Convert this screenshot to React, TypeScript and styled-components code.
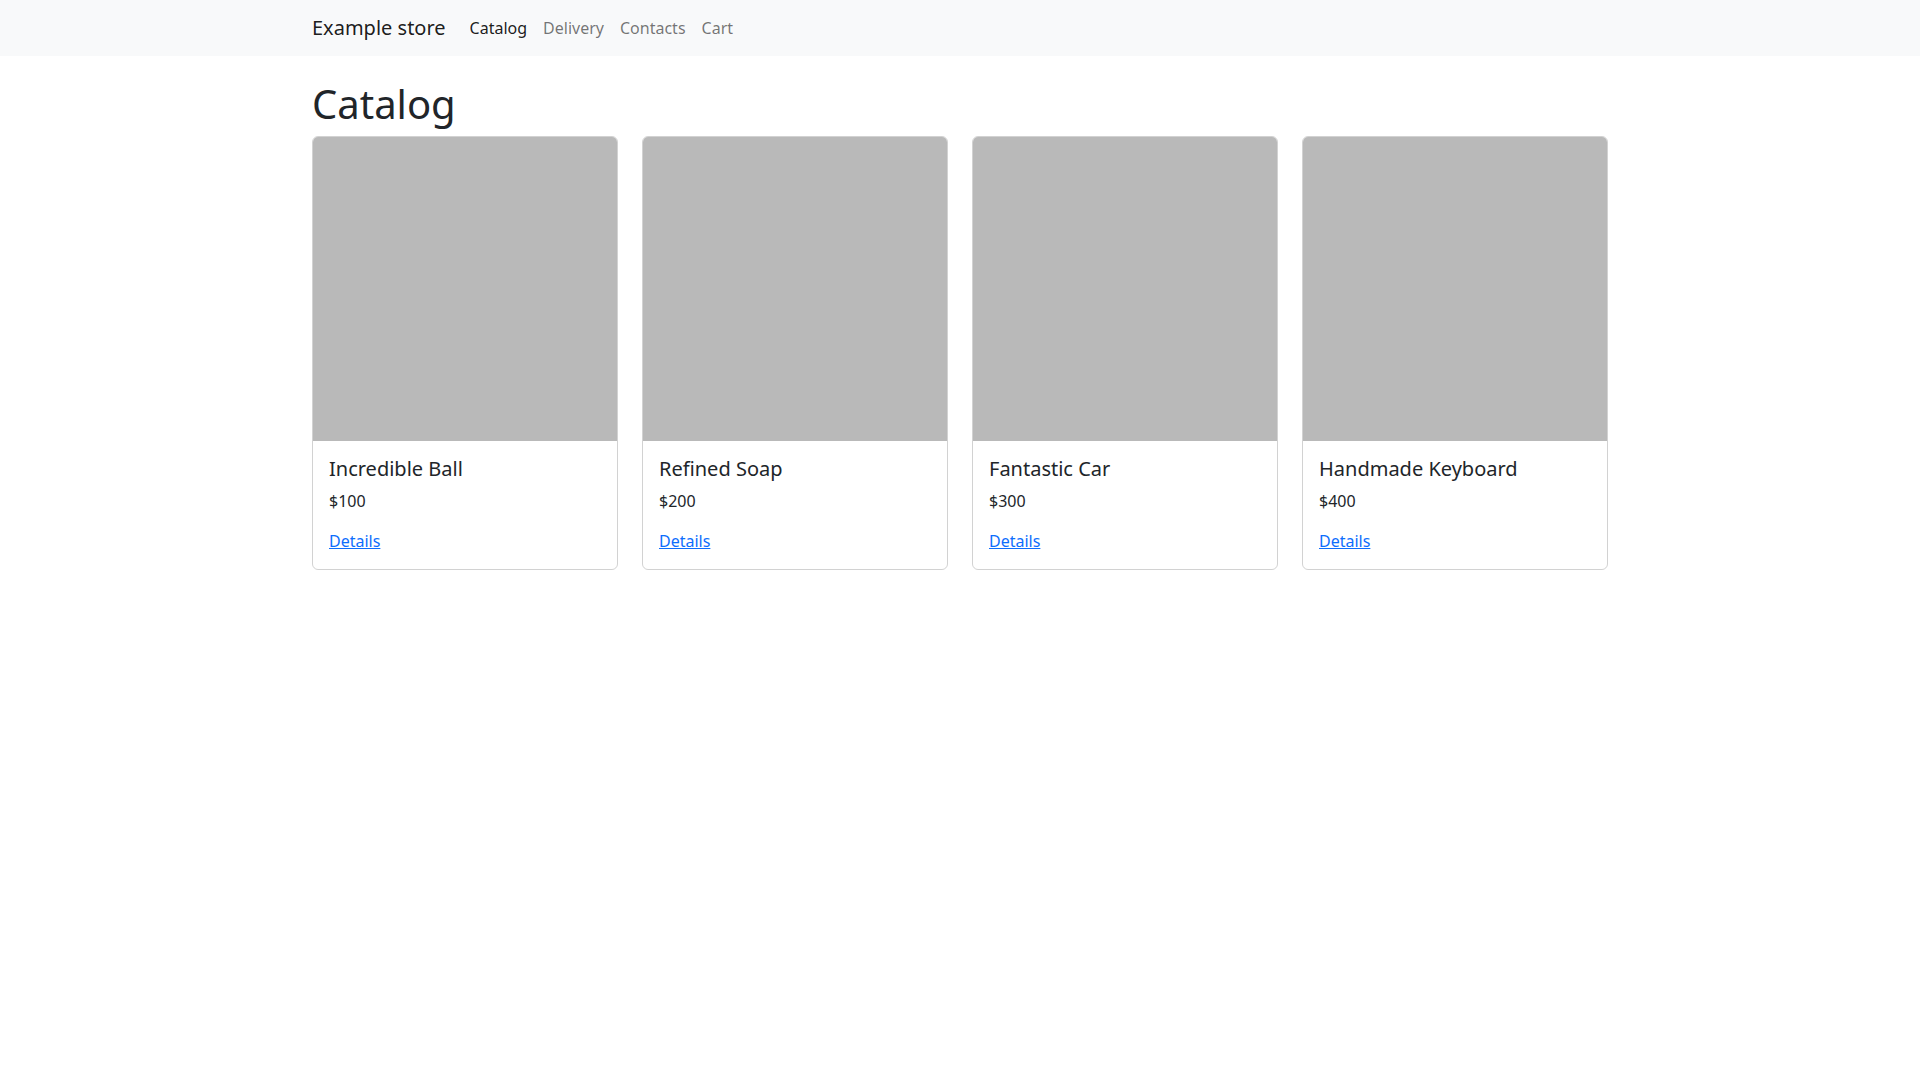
import React from "react";
import styled, { createGlobalStyle } from "styled-components";

const GlobalStyle = createGlobalStyle`
  *, *::before, *::after { box-sizing: border-box; }
  body {
    margin: 0;
    font-family: "Noto Sans", "Liberation Sans", sans-serif;
    font-size: 16px;
    line-height: 1.5;
    color: #212529;
    background: #fff;
  }
`;

const Navbar = styled.nav`
  background: #f8f9fa;
  padding: 8px 0;
`;

const Container = styled.div`
  width: 1320px;
  margin: 0 auto;
  padding: 0 12px;
`;

const NavInner = styled(Container)`
  display: flex;
  align-items: center;
`;

const Brand = styled.a`
  font-size: 20px;
  padding: 5px 0;
  margin-right: 16px;
  color: rgba(0, 0, 0, 0.9);
  text-decoration: none;
  line-height: 30px;
`;

const NavList = styled.div`
  display: flex;
`;

const NavLink = styled.a<{ $active?: boolean }>`
  padding: 8px;
  color: ${(p) => (p.$active ? "rgba(0,0,0,0.9)" : "rgba(0,0,0,0.55)")};
  text-decoration: none;
  line-height: 24px;
`;

const Main = styled(Container)`
  padding-top: 24px;
`;

const Title = styled.h1`
  font-size: 40px;
  font-weight: 400;
  line-height: 1.2;
  margin: 0 0 8px;
`;

const Grid = styled.div`
  display: grid;
  grid-template-columns: repeat(4, 1fr);
  gap: 24px;
`;

const Card = styled.div`
  border: 1px solid rgba(0, 0, 0, 0.175);
  border-radius: 6px;
  overflow: hidden;
  display: flex;
  flex-direction: column;
`;

const CardImage = styled.div`
  aspect-ratio: 1 / 1;
  background: #b9b9b9;
`;

const CardBody = styled.div`
  padding: 16px;
`;

const CardTitle = styled.h5`
  font-size: 20px;
  font-weight: 400;
  line-height: 1.2;
  margin: 0 0 8px;
`;

const CardText = styled.p`
  margin: 0 0 16px;
  font-size: 16px;
  line-height: 24px;
`;

const CardLink = styled.a`
  color: #0d6efd;
  text-decoration: underline;
  font-size: 16px;
  line-height: 24px;
  display: inline-block;
`;

const products = [
  { name: "Incredible Ball", price: 100 },
  { name: "Refined Soap", price: 200 },
  { name: "Fantastic Car", price: 300 },
  { name: "Handmade Keyboard", price: 400 },
];

export default function App() {
  return (
    <>
      <GlobalStyle />
      <Navbar>
        <NavInner>
          <Brand href="#">Example store</Brand>
          <NavList>
            <NavLink $active href="#">Catalog</NavLink>
            <NavLink href="#">Delivery</NavLink>
            <NavLink href="#">Contacts</NavLink>
            <NavLink href="#">Cart</NavLink>
          </NavList>
        </NavInner>
      </Navbar>
      <Main>
        <Title>Catalog</Title>
        <Grid>
          {products.map((p) => (
            <Card key={p.name}>
              <CardImage />
              <CardBody>
                <CardTitle>{p.name}</CardTitle>
                <CardText>${p.price}</CardText>
                <CardLink href="#">Details</CardLink>
              </CardBody>
            </Card>
          ))}
        </Grid>
      </Main>
    </>
  );
}
